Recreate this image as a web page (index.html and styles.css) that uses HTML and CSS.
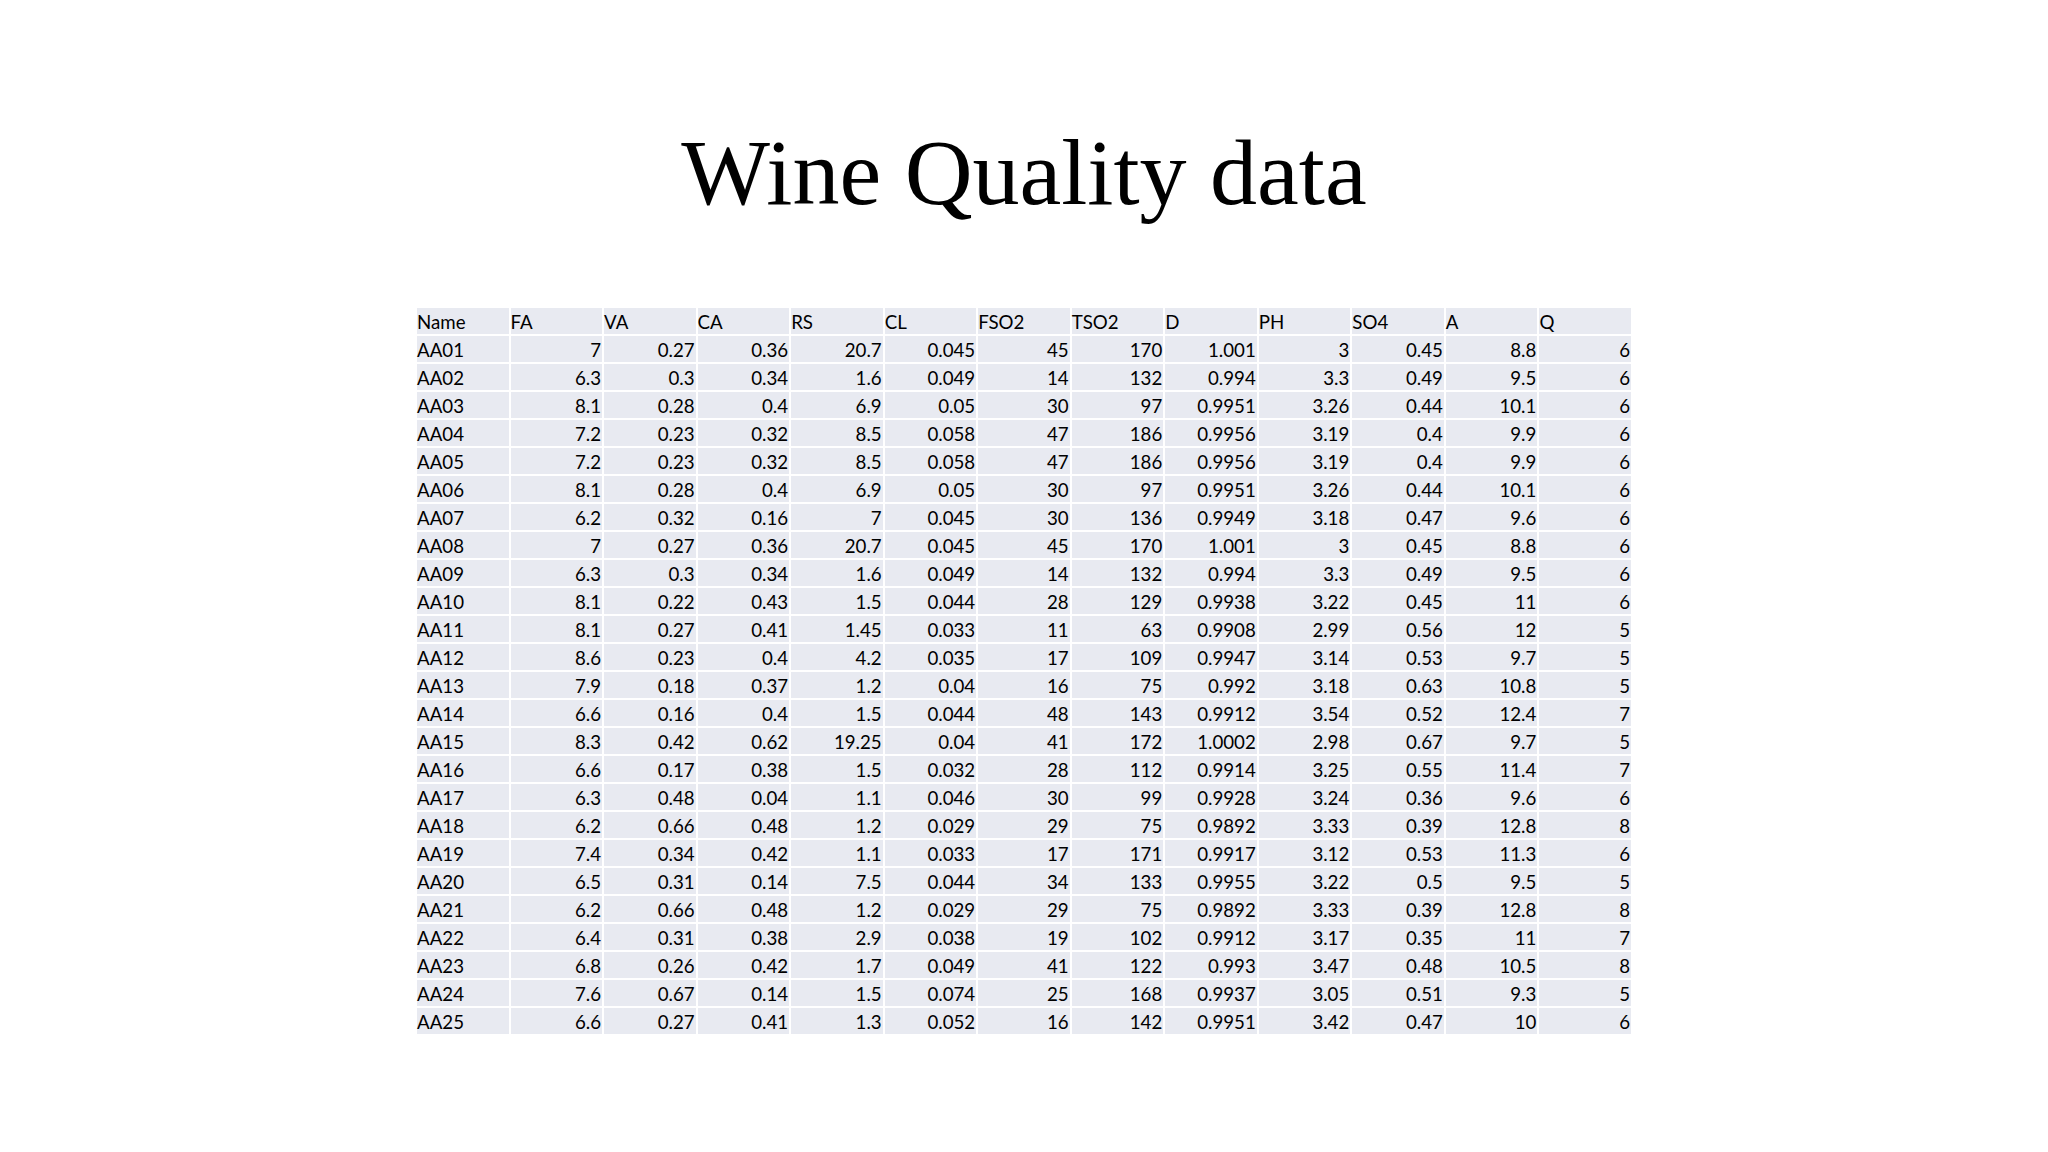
FILE: index.html
```html
<!DOCTYPE html>
<html lang="en">
<head>
<meta charset="utf-8">
<title>Wine Quality data</title>
<link rel="stylesheet" href="styles.css">
</head>
<body>
<main class="slide">
  <h1 class="title">Wine Quality data</h1>
  <table class="data">
    <thead>
      <tr><th>Name</th><th>FA</th><th>VA</th><th>CA</th><th>RS</th><th>CL</th><th>FSO2</th><th>TSO2</th><th>D</th><th>PH</th><th>SO4</th><th>A</th><th>Q</th></tr>
    </thead>
    <tbody>
      <tr><td>AA01</td><td>7</td><td>0.27</td><td>0.36</td><td>20.7</td><td>0.045</td><td>45</td><td>170</td><td>1.001</td><td>3</td><td>0.45</td><td>8.8</td><td>6</td></tr>
      <tr><td>AA02</td><td>6.3</td><td>0.3</td><td>0.34</td><td>1.6</td><td>0.049</td><td>14</td><td>132</td><td>0.994</td><td>3.3</td><td>0.49</td><td>9.5</td><td>6</td></tr>
      <tr><td>AA03</td><td>8.1</td><td>0.28</td><td>0.4</td><td>6.9</td><td>0.05</td><td>30</td><td>97</td><td>0.9951</td><td>3.26</td><td>0.44</td><td>10.1</td><td>6</td></tr>
      <tr><td>AA04</td><td>7.2</td><td>0.23</td><td>0.32</td><td>8.5</td><td>0.058</td><td>47</td><td>186</td><td>0.9956</td><td>3.19</td><td>0.4</td><td>9.9</td><td>6</td></tr>
      <tr><td>AA05</td><td>7.2</td><td>0.23</td><td>0.32</td><td>8.5</td><td>0.058</td><td>47</td><td>186</td><td>0.9956</td><td>3.19</td><td>0.4</td><td>9.9</td><td>6</td></tr>
      <tr><td>AA06</td><td>8.1</td><td>0.28</td><td>0.4</td><td>6.9</td><td>0.05</td><td>30</td><td>97</td><td>0.9951</td><td>3.26</td><td>0.44</td><td>10.1</td><td>6</td></tr>
      <tr><td>AA07</td><td>6.2</td><td>0.32</td><td>0.16</td><td>7</td><td>0.045</td><td>30</td><td>136</td><td>0.9949</td><td>3.18</td><td>0.47</td><td>9.6</td><td>6</td></tr>
      <tr><td>AA08</td><td>7</td><td>0.27</td><td>0.36</td><td>20.7</td><td>0.045</td><td>45</td><td>170</td><td>1.001</td><td>3</td><td>0.45</td><td>8.8</td><td>6</td></tr>
      <tr><td>AA09</td><td>6.3</td><td>0.3</td><td>0.34</td><td>1.6</td><td>0.049</td><td>14</td><td>132</td><td>0.994</td><td>3.3</td><td>0.49</td><td>9.5</td><td>6</td></tr>
      <tr><td>AA10</td><td>8.1</td><td>0.22</td><td>0.43</td><td>1.5</td><td>0.044</td><td>28</td><td>129</td><td>0.9938</td><td>3.22</td><td>0.45</td><td>11</td><td>6</td></tr>
      <tr><td>AA11</td><td>8.1</td><td>0.27</td><td>0.41</td><td>1.45</td><td>0.033</td><td>11</td><td>63</td><td>0.9908</td><td>2.99</td><td>0.56</td><td>12</td><td>5</td></tr>
      <tr><td>AA12</td><td>8.6</td><td>0.23</td><td>0.4</td><td>4.2</td><td>0.035</td><td>17</td><td>109</td><td>0.9947</td><td>3.14</td><td>0.53</td><td>9.7</td><td>5</td></tr>
      <tr><td>AA13</td><td>7.9</td><td>0.18</td><td>0.37</td><td>1.2</td><td>0.04</td><td>16</td><td>75</td><td>0.992</td><td>3.18</td><td>0.63</td><td>10.8</td><td>5</td></tr>
      <tr><td>AA14</td><td>6.6</td><td>0.16</td><td>0.4</td><td>1.5</td><td>0.044</td><td>48</td><td>143</td><td>0.9912</td><td>3.54</td><td>0.52</td><td>12.4</td><td>7</td></tr>
      <tr><td>AA15</td><td>8.3</td><td>0.42</td><td>0.62</td><td>19.25</td><td>0.04</td><td>41</td><td>172</td><td>1.0002</td><td>2.98</td><td>0.67</td><td>9.7</td><td>5</td></tr>
      <tr><td>AA16</td><td>6.6</td><td>0.17</td><td>0.38</td><td>1.5</td><td>0.032</td><td>28</td><td>112</td><td>0.9914</td><td>3.25</td><td>0.55</td><td>11.4</td><td>7</td></tr>
      <tr><td>AA17</td><td>6.3</td><td>0.48</td><td>0.04</td><td>1.1</td><td>0.046</td><td>30</td><td>99</td><td>0.9928</td><td>3.24</td><td>0.36</td><td>9.6</td><td>6</td></tr>
      <tr><td>AA18</td><td>6.2</td><td>0.66</td><td>0.48</td><td>1.2</td><td>0.029</td><td>29</td><td>75</td><td>0.9892</td><td>3.33</td><td>0.39</td><td>12.8</td><td>8</td></tr>
      <tr><td>AA19</td><td>7.4</td><td>0.34</td><td>0.42</td><td>1.1</td><td>0.033</td><td>17</td><td>171</td><td>0.9917</td><td>3.12</td><td>0.53</td><td>11.3</td><td>6</td></tr>
      <tr><td>AA20</td><td>6.5</td><td>0.31</td><td>0.14</td><td>7.5</td><td>0.044</td><td>34</td><td>133</td><td>0.9955</td><td>3.22</td><td>0.5</td><td>9.5</td><td>5</td></tr>
      <tr><td>AA21</td><td>6.2</td><td>0.66</td><td>0.48</td><td>1.2</td><td>0.029</td><td>29</td><td>75</td><td>0.9892</td><td>3.33</td><td>0.39</td><td>12.8</td><td>8</td></tr>
      <tr><td>AA22</td><td>6.4</td><td>0.31</td><td>0.38</td><td>2.9</td><td>0.038</td><td>19</td><td>102</td><td>0.9912</td><td>3.17</td><td>0.35</td><td>11</td><td>7</td></tr>
      <tr><td>AA23</td><td>6.8</td><td>0.26</td><td>0.42</td><td>1.7</td><td>0.049</td><td>41</td><td>122</td><td>0.993</td><td>3.47</td><td>0.48</td><td>10.5</td><td>8</td></tr>
      <tr><td>AA24</td><td>7.6</td><td>0.67</td><td>0.14</td><td>1.5</td><td>0.074</td><td>25</td><td>168</td><td>0.9937</td><td>3.05</td><td>0.51</td><td>9.3</td><td>5</td></tr>
      <tr><td>AA25</td><td>6.6</td><td>0.27</td><td>0.41</td><td>1.3</td><td>0.052</td><td>16</td><td>142</td><td>0.9951</td><td>3.42</td><td>0.47</td><td>10</td><td>6</td></tr>
    </tbody>
  </table>
</main>
</body>
</html>
```

FILE: styles.css
```css
html, body {
  margin: 0;
  padding: 0;
  background: #ffffff;
}

.slide {
  width: 2048px;
  height: 1152px;
  display: flex;
  flex-direction: column;
  align-items: center;
  overflow: hidden;
}

.title {
  margin: 126px 0 0 0;
  font-family: "Liberation Serif", "Times New Roman", serif;
  font-weight: normal;
  font-size: 94px;
  line-height: 93px;
  color: #000000;
}

.data {
  margin-top: 87px;
  width: 1218px;
  table-layout: fixed;
  border-collapse: collapse;
  font-family: Lato, "Liberation Sans", sans-serif;
  font-size: 18.7px;
  color: #000000;
}

.data th,
.data td {
  height: 26px;
  padding: 3px 1px 0 0;
  line-height: 23px;
  background: #e8eaf1;
  border: 2px solid #ffffff;
  white-space: nowrap;
  box-sizing: border-box;
  vertical-align: middle;
}

.data th {
  font-weight: normal;
  text-align: left;
}

.data td {
  text-align: right;
}

.data td:first-child {
  text-align: left;
}
```
